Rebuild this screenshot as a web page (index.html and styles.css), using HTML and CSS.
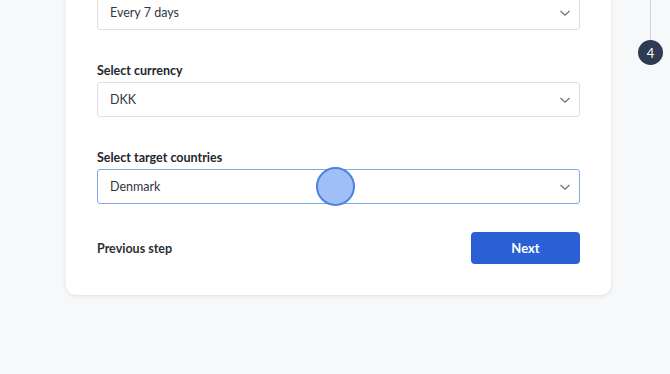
FILE: index.html
```html
<!DOCTYPE html>
<html lang="en">

<head>
    <meta charset="UTF-8">
    <meta name="viewport" content="width=device-width, initial-scale=1.0">
    <title>Campaign setup</title>
    <link rel="stylesheet" href="styles.css">
</head>

<body>
    <div class="page">
        <div class="card">
            <div class="field first">
                <div class="select">
                    <span>Every 7 days</span>
                    <svg class="chev" width="12" height="8" viewBox="0 0 12 8"><path d="M1.5 2 6 6.2 10.5 2" /></svg>
                </div>
            </div>

            <div class="field">
                <label>Select currency</label>
                <div class="select">
                    <span>DKK</span>
                    <svg class="chev" width="12" height="8" viewBox="0 0 12 8"><path d="M1.5 2 6 6.2 10.5 2" /></svg>
                </div>
            </div>

            <div class="field">
                <label>Select target countries</label>
                <div class="select active">
                    <span>Denmark</span>
                    <svg class="chev" width="12" height="8" viewBox="0 0 12 8"><path d="M1.5 2 6 6.2 10.5 2" /></svg>
                    <i class="cursor"></i>
                </div>
            </div>

            <div class="actions">
                <a href="#" class="prev">Previous step</a>
                <button class="next">Next</button>
            </div>
        </div>

        <div class="steps">
            <span class="line"></span>
            <span class="step">4</span>
        </div>
    </div>
</body>

</html>
```

FILE: styles.css
```css
* {
    box-sizing: border-box;
}

body {
    margin: 0;
    background: #f7f8fa;
    font-family: "Lato", "Liberation Sans", sans-serif;
    color: #2b2f36;
}

.page {
    display: flex;
    align-items: flex-start;
    padding-left: 66px;
    height: 374px;
    overflow: hidden;
}

.card {
    width: 545px;
    margin-top: -36px;
    padding: 31px;
    background: #fff;
    border-radius: 10px;
    box-shadow: 0 1px 4px rgba(30, 40, 60, 0.12);
}

.field {
    display: flex;
    flex-direction: column;
    margin-top: 34px;
}

.field.first {
    margin-top: 0;
}

.field label {
    font-size: 12.5px;
    font-weight: 700;
    height: 18px;
    line-height: 14px;
    color: #23272e;
}

.select {
    position: relative;
    display: flex;
    align-items: center;
    justify-content: space-between;
    height: 35px;
    padding: 0 8px 0 12px;
    border: 1px solid #dcdfe4;
    border-radius: 3px;
    font-size: 12.5px;
    color: #33373f;
}

.select.active {
    border-color: #7fa9e0;
}

.chev {
    fill: none;
    stroke: #6a6f78;
    stroke-width: 1.2;
}

.cursor {
    position: absolute;
    left: 218px;
    top: -3px;
    width: 39px;
    height: 39px;
    border-radius: 50%;
    background: #9fbff6;
    border: 2px solid #4c82e2;
}

.actions {
    display: flex;
    justify-content: space-between;
    align-items: center;
    margin-top: 28px;
}

.prev {
    font-size: 12.5px;
    font-weight: 700;
    color: #2b2f36;
    text-decoration: none;
}

.next {
    width: 109px;
    height: 32px;
    border: none;
    border-radius: 4px;
    background: #2a5fd6;
    color: #fff;
    font-family: inherit;
    font-size: 13px;
    font-weight: 700;
}

.steps {
    display: flex;
    flex-direction: column;
    align-items: center;
    margin-left: 27px;
    width: 25px;
}

.steps .line {
    width: 1px;
    height: 40px;
    background: #cdd1d8;
}

.steps .step {
    display: flex;
    justify-content: center;
    align-items: center;
    width: 25px;
    height: 25px;
    border-radius: 50%;
    background: #2e3b52;
    color: #fff;
    font-size: 13px;
    font-weight: 400;
}
```
